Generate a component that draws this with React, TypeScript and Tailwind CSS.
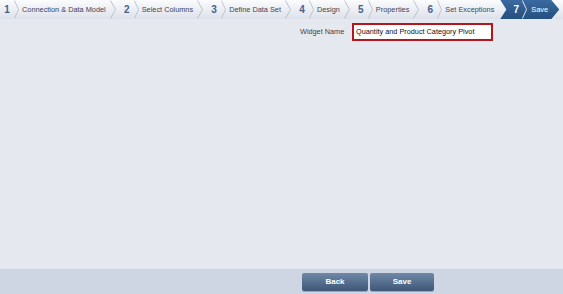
import React from 'react';

const steps = [
  'Connection & Data Model',
  'Select Columns',
  'Define Data Set',
  'Design',
  'Properties',
  'Set Exceptions',
];

function Chevron({ color = '#b4bccb', className = '' }: { color?: string; className?: string }) {
  return (
    <svg viewBox="0 0 6 19" className={`h-[19px] shrink-0 ${className}`} preserveAspectRatio="none">
      <path d="M0.5,0.5 Q4,7 5.5,9.5 Q4,12 0.5,18.5" fill="none" stroke={color} strokeWidth="0.9" />
    </svg>
  );
}

export default function App() {
  return (
    <div className="w-[563px] h-[294px] flex flex-col bg-[#e6e8f0] font-['Liberation_Sans',Arial,sans-serif] overflow-hidden">
      {/* wizard steps */}
      <div className="h-[19px] flex items-center bg-gradient-to-b from-[#fbfcfd] to-[#dde1ea] shrink-0">
        {steps.map((label, i) => (
          <div key={label} className="flex items-center h-full">
            <span className="w-[14px] text-center text-[10px] font-bold text-[#44628c]">{i + 1}</span>
            <Chevron className="w-[5px]" />
            <span className="pl-[3px] pr-[4px] text-[7.35px] text-[#3a4658] whitespace-nowrap">{label}</span>
            {i < steps.length - 1 && <Chevron className="w-[6px] mr-[4px]" />}
          </div>
        ))}
        <div className="ml-[2px] h-full w-[59px] flex items-center pl-[12px] bg-gradient-to-b from-[#3b6aa0] to-[#24507f] [clip-path:polygon(0_0,51px_0,100%_50%,51px_100%,0_100%,6px_50%)]">
          <span className="w-[8px] text-center text-[10px] font-bold text-white">7</span>
          <Chevron color="#ffffff" className="w-[5px] ml-[2px]" />
          <span className="pl-[4px] text-[7.35px] text-white">Save</span>
        </div>
      </div>

      {/* content */}
      <div className="flex-1 pt-[4px]">
        <div className="flex items-center">
          <span className="ml-[300px] w-[52px] text-[7.3px] text-[#3a3f48]">Widget Name</span>
          <div className="w-[141px] h-[18px] border-2 border-[#b3161d] bg-white flex items-center pl-[2px]">
            <span className="text-[7.3px] text-[#111]">Quantity and Product Category Pivot</span>
          </div>
        </div>
      </div>

      {/* footer */}
      <div className="h-[26px] shrink-0 bg-[#ced5e3] border-t border-[#dfe3eb] flex items-center pl-[302px] gap-[2px]">
        <button className="w-[66px] h-[18px] rounded-[2px] bg-gradient-to-b from-[#7189a8] to-[#3e5777] text-white text-[8px] font-bold shadow-[0_1px_0_#9aa6ba]">
          Back
        </button>
        <button className="w-[64px] h-[18px] rounded-[2px] bg-gradient-to-b from-[#7189a8] to-[#3e5777] text-white text-[8px] font-bold shadow-[0_1px_0_#9aa6ba]">
          Save
        </button>
      </div>
    </div>
  );
}
